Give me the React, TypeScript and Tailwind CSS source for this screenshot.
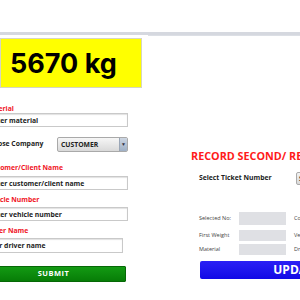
import React from 'react';

const labelRed = 'block h-[9px] leading-[9px] text-[6.8px] font-bold text-[#f0141e] whitespace-nowrap';
const inputCls =
  'block px-[3px] border border-[#c9c9c9] bg-white shadow-[inset_0_1px_1px_rgba(0,0,0,0.12)] text-[6.8px] font-bold text-[#222] outline-none placeholder:text-[#222]';

function InfoRow({ label, other, h, mt }: { label: string; other: string; h: string; mt: string }) {
  return (
    <div className={`flex items-center ${mt}`}>
      <span className="w-[40px] shrink-0 text-[5.5px] text-[#444] whitespace-nowrap">{label}</span>
      <div className={`w-[47px] shrink-0 ${h} bg-[#dfe0e4]`} />
      <span className="ml-[8px] shrink-0 text-[5.5px] text-[#444] whitespace-nowrap">{other}</span>
    </div>
  );
}

export default function App() {
  return (
    <div className="w-[300px] h-[300px] overflow-hidden bg-white font-['Open_Sans',sans-serif]">
      <div className="h-[32px]" />
      <div className="h-[3px] bg-[#d5d8df]" />

      <div className="flex">
        {/* Left: weight + entry form */}
        <div className="w-[142px] shrink-0 mt-[3px]">
          <div className="h-[50px] bg-[#ffff00] border border-[#d6d6c0] flex items-center pl-[9px]">
            <span className="font-['Inter',sans-serif] font-bold text-[27px] leading-none text-black">5670 kg</span>
          </div>

          <div className="ml-[-15px] w-[143px]">
            <label className={`${labelRed} mt-[16px]`}>Material</label>
            <input className={`${inputCls} w-[143px] h-[14px]`} placeholder="Enter material" />

            <div className="flex items-center mt-[10px] h-[15px]">
              <span className="w-[72px] shrink-0 text-[6.8px] font-bold text-[#222] whitespace-nowrap">Choose Company</span>
              <div className="flex h-[15px] w-[71px] shrink-0 border border-[#a9a9a9] rounded-[2px] bg-gradient-to-b from-[#f6f6f6] to-[#d9d9d9] overflow-hidden">
                <span className="flex-1 pl-[3px] text-[6.8px] font-bold text-[#222] leading-[13px]">CUSTOMER</span>
                <span className="w-[8px] flex items-center justify-center bg-gradient-to-b from-[#cdd6e2] to-[#9fb0c6] border-l border-[#9aa6b6] text-[5px] text-[#334]">▼</span>
              </div>
            </div>

            <label className={`${labelRed} mt-[11px]`}>Customer/Client Name</label>
            <input className={`${inputCls} w-[143px] h-[14px] mt-[4px]`} placeholder="Enter customer/client name" />

            <label className={`${labelRed} mt-[5px]`}>Vehicle Number</label>
            <input className={`${inputCls} w-[143px] h-[14px] mt-[3px]`} placeholder="Enter vehicle number" />

            <label className={`${labelRed} mt-[5px]`}>Driver Name</label>
            <input className={`${inputCls} w-[141px] h-[15px] mt-[3px] ml-[-3px] pl-[1px]`} placeholder="Enter driver name" />

            <button className="mt-[13px] w-[141px] h-[16px] bg-gradient-to-b from-[#139a13] to-[#077d07] border border-[#066806] rounded-[1px] text-white text-[7.5px] font-bold tracking-[0.5px] flex items-center justify-center pr-[4px]">
              SUBMIT
            </button>
          </div>
        </div>

        {/* Right: second record */}
        <div className="ml-[6px] flex-1 border-t border-[#dcdfe5] min-w-0">
          <div className="mt-[114px] pl-[43px] h-[12px] leading-[12px] text-[10.8px] font-bold text-[#ff1a1a] whitespace-nowrap">
            RECORD SECOND/ RETURN WEIGHT
          </div>

          <div className="mt-[10px] pl-[51px] flex items-center h-[13px]">
            <span className="w-[97px] shrink-0 text-[6.8px] font-bold text-[#222] whitespace-nowrap">Select Ticket Number</span>
            <div className="h-[13px] w-[60px] shrink-0 border border-[#aaa] rounded-[2px] bg-gradient-to-b from-[#f2f2f2] to-[#d8d8d8] pl-[2px] text-[6.8px] font-bold text-[#222] leading-[11px]">
              Select
            </div>
          </div>

          <div className="pl-[51px]">
            <InfoRow label="Selected No:" other="Company" h="h-[13px]" mt="mt-[27px]" />
            <InfoRow label="First Weight" other="Vehicle No" h="h-[11px]" mt="mt-[5px]" />
            <InfoRow label="Material" other="Driver Name" h="h-[11px]" mt="mt-[3px]" />
          </div>

          <div className="pl-[52px] mt-[6px]">
            <button className="w-[194px] shrink-0 h-[18px] bg-gradient-to-b from-[#2a1ff5] to-[#1208e6] rounded-[2px] text-white text-[12px] font-bold flex items-center justify-center">
              UPDATE
            </button>
          </div>
        </div>
      </div>
    </div>
  );
}
